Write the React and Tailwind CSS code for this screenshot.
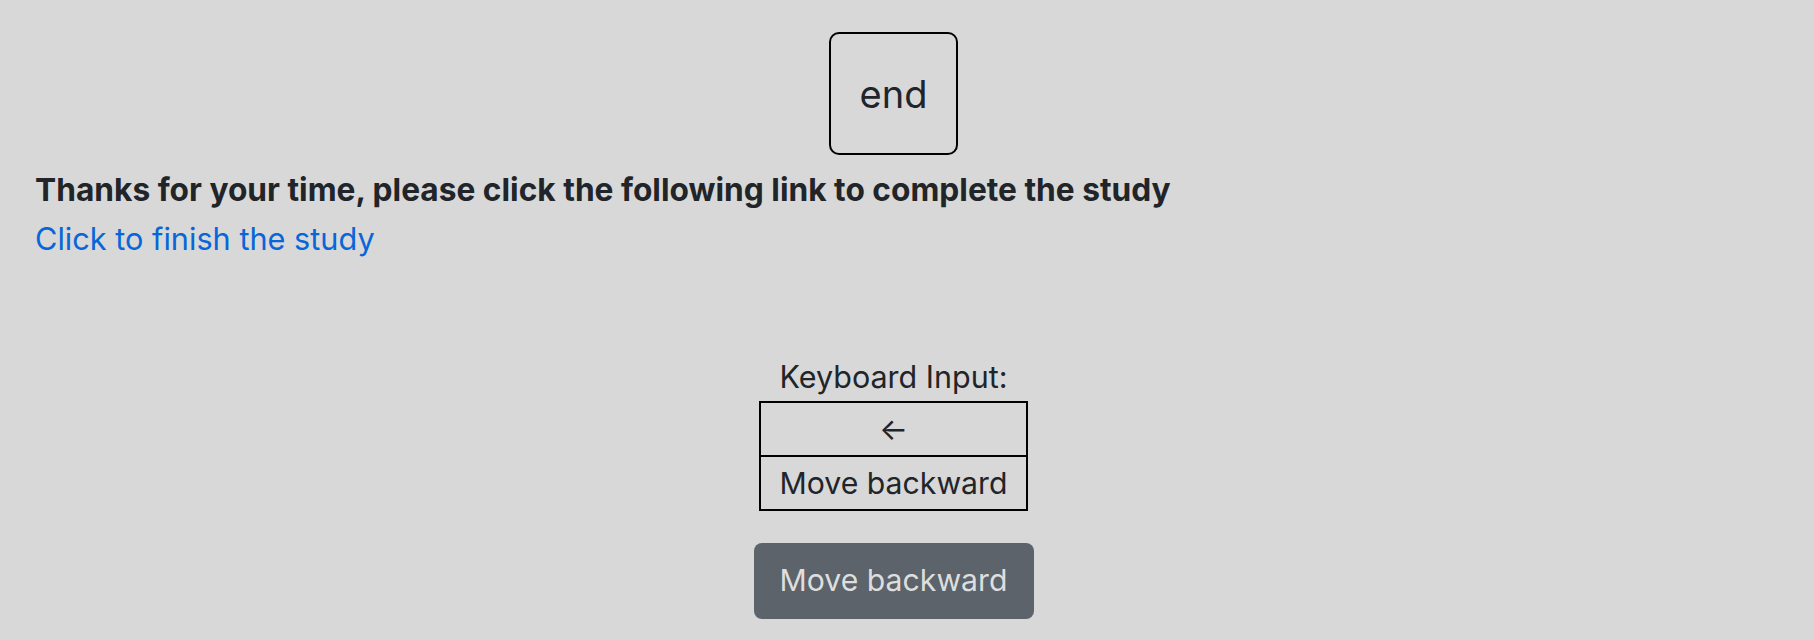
import React from 'react';

// Study finish screen: key cap, thank-you message, keyboard legend and nav button
function KeyCap({ label }) {
  return (
    <div className="flex justify-center pt-[32px]">
      <div className="w-[129px] h-[123px] border-2 border-black rounded-[10px] flex items-center justify-center">
        <span className="text-[38px] leading-none text-[#212529]">{label}</span>
      </div>
    </div>
  );
}

function KeyLegend() {
  return (
    <div className="flex flex-col items-center">
      <p className="text-[30.5px] leading-[36px] mb-[6px] text-[#212529]">Keyboard Input:</p>
      <table className="w-[269px] border-collapse border-2 border-black text-center text-[30.2px] text-[#212529]">
        <tbody>
          <tr>
            <td className="h-[54px] border-2 border-black text-[30.5px]">←</td>
          </tr>
          <tr>
            <td className="h-[54px] border-2 border-black leading-none">Move backward</td>
          </tr>
        </tbody>
      </table>
    </div>
  );
}

export default function App() {
  return (
    <div
      className="w-[1814px] h-[640px] bg-[#d8d8d8] overflow-hidden"
      style={{ fontFamily: 'Inter, "Noto Sans", sans-serif' }}
    >
      <div className="w-[1787px]">
        <KeyCap label="end" />

        <div className="pl-[35px] pt-[16px]">
          <h5 className="text-[31.7px] leading-[38px] font-bold text-[#212529]">
            Thanks for your time, please click the following link to complete the study
          </h5>
          <a href="#" className="block mt-[9px] text-[30.7px] leading-[42px] text-[#0866d9]">
            Click to finish the study
          </a>
        </div>

        <div className="pt-[99px]">
          <KeyLegend />
        </div>

        <div className="flex justify-center pt-[32px]">
          <button
            disabled
            className="w-[280px] h-[76px] rounded-[8px] bg-[#5c636a] text-[30.2px] text-[#dedede]"
          >
            Move backward
          </button>
        </div>
      </div>
    </div>
  );
}
